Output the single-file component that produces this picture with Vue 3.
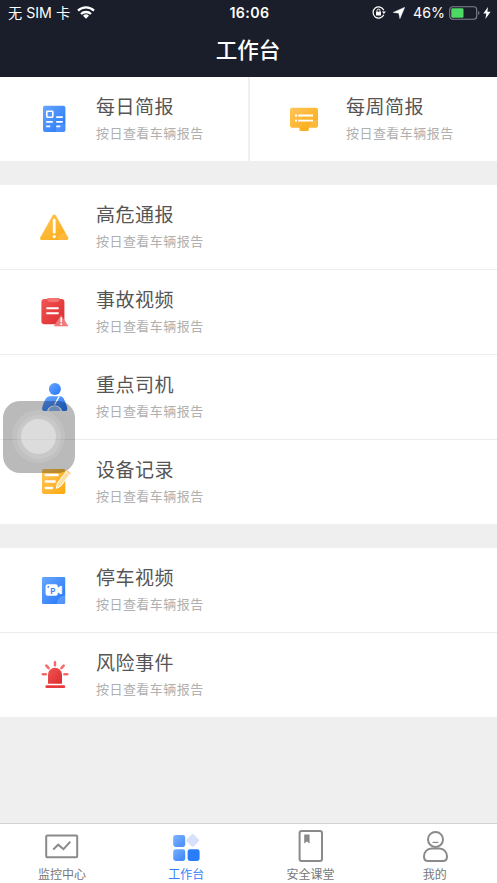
<script setup>
import { ref } from 'vue';

const reports = [
  { icon: 'daily', title: '每日简报' },
  { icon: 'weekly', title: '每周简报' }
];

const groups = [
  [
    { icon: 'danger', title: '高危通报' },
    { icon: 'accident', title: '事故视频' },
    { icon: 'driver', title: '重点司机' },
    { icon: 'device', title: '设备记录' }
  ],
  [
    { icon: 'parking', title: '停车视频' },
    { icon: 'risk', title: '风险事件' }
  ]
];

const sections = [reports, ...groups];
const subtitle = '按日查看车辆报告';

const tabs = [
  { key: 'monitor', label: '监控中心' },
  { key: 'work', label: '工作台' },
  { key: 'class', label: '安全课堂' },
  { key: 'mine', label: '我的' }
];

const activeTab = ref('work');
</script>

<template>
  <div class="page">
    <svg class="defs" width="0" height="0">
      <defs>
        <linearGradient id="blue" x1="0" y1="0" x2="1" y2="1">
          <stop offset="0" stop-color="#68a6ff" />
          <stop offset="1" stop-color="#2376f8" />
        </linearGradient>
        <linearGradient id="orange" x1="0" y1="0" x2="1" y2="1">
          <stop offset="0" stop-color="#ffc65c" />
          <stop offset="1" stop-color="#fca90d" />
        </linearGradient>
        <linearGradient id="red" x1="0" y1="0" x2="1" y2="1">
          <stop offset="0" stop-color="#f25453" />
          <stop offset="1" stop-color="#dc2c30" />
        </linearGradient>
      </defs>
    </svg>

    <header class="header">
      <div class="status">
        <div class="status-left">
          <span>无 SIM 卡</span>
          <svg class="wifi" width="18" height="13" viewBox="0 0 18 13">
            <g fill="none" stroke="#fff" stroke-width="2.3">
              <path d="M1 4.7a11.5 11.5 0 0 1 16 0" />
              <path d="M4 8a7.2 7.2 0 0 1 10 0" />
            </g>
            <path d="M6 9.8a4.3 4.3 0 0 1 6 0l-3 3z" fill="#fff" />
          </svg>
        </div>
        <span class="time">16:06</span>
        <div class="status-right">
          <svg width="14" height="13" viewBox="0 0 14 13">
            <path d="M11.8 4.2a5.6 5.6 0 1 0 0 4.6" fill="none" stroke="#fff" stroke-width="1.2" />
            <path d="M9.9 5.4h4l-2 2.6z" fill="#fff" />
            <rect x="4" y="5.8" width="5" height="3.8" rx=".5" fill="#fff" />
            <path d="M5 6V4.6a1.5 1.5 0 0 1 3 0V6" fill="none" stroke="#fff" />
          </svg>
          <svg class="arrow" width="12" height="12" viewBox="0 0 12 12">
            <path d="M11.8.2 6.9 11.8 5.8 6.2.1 5.4z" fill="#fff" stroke="#fff" stroke-width=".4" />
          </svg>
          <span class="percent">46%</span>
          <svg class="battery" width="32" height="14" viewBox="0 0 32 14">
            <rect x=".7" y=".7" width="27" height="12.6" rx="3" fill="none" stroke="#7f838b" stroke-width="1.1" />
            <rect x="2.3" y="2.3" width="12.2" height="9.4" rx="1.3" fill="#4cd964" />
            <path d="M29.2 5v4c1.7-.7 1.7-3.3 0-4z" fill="#7f838b" />
          </svg>
          <svg class="bolt" width="8" height="12" viewBox="0 0 8 12">
            <path d="M5 0 .3 6.6h3L2.4 12 7.6 4.8H4.4z" fill="#fff" />
          </svg>
        </div>
      </div>
      <h1>工作台</h1>
    </header>

    <main class="content">
      <section
        v-for="(items, index) in sections"
        :key="index"
        class="section"
        :class="{ split: index === 0 }"
      >
        <div v-for="item in items" :key="item.icon" class="item">
          <svg class="icon" width="40" height="40" viewBox="0 0 40 40">
            <g v-if="item.icon === 'daily'">
              <rect x="9" y="6.7" width="22.4" height="26.4" rx="2" fill="url(#blue)" />
              <path d="M22 33.1v-2a6 6 0 0 1 6-6h3.4v6a2 2 0 0 1-2 2z" fill="#fff" opacity=".14" />
              <rect x="12.8" y="12.2" width="6" height="6" rx=".6" fill="none" stroke="#fff" stroke-width="1.6" />
              <path d="M22.2 18.1h6.6M12.2 22.8h6.6M22.2 22.8h6.6M12.2 27.3h4M22.2 27.3h4" stroke="#fff" stroke-width="1.7" />
            </g>

            <g v-else-if="item.icon === 'weekly'">
              <path d="M8 8.7h24a2 2 0 0 1 2 2v16a2 2 0 0 1-2 2h-7.2V31a1 1 0 0 1-1 1h-7.4a1 1 0 0 1-1-1v-2.3H8a2 2 0 0 1-2-2v-16a2 2 0 0 1 2-2z" fill="url(#orange)" />
              <path d="M24.8 28.7a9 9 0 0 1 9.2-8v6a2 2 0 0 1-2 2z" fill="#fff" opacity=".12" />
              <path d="M11 16.5h2M14.2 16.5H29M11 21.7h2M14.2 21.7H29" stroke="#fff" stroke-width="1.8" />
            </g>

            <g v-else-if="item.icon === 'danger'">
              <path d="M18.6 8.5a1.9 1.9 0 0 1 3.3 0l12.2 22c.7 1.3 0 2.5-1.4 2.5H7.6c-1.4 0-2.1-1.2-1.4-2.5z" fill="url(#orange)" />
              <path d="M24 33c.3-4.4 3.2-7.5 7.4-7.5l2.7 5c.7 1.3 0 2.5-1.4 2.5z" fill="#fff" opacity=".14" />
              <path d="M20.2 13.2v12" stroke="#fff" stroke-width="2.8" stroke-linecap="round" />
              <circle cx="20.2" cy="29.6" r="1.6" fill="#fff" />
            </g>

            <g v-else-if="item.icon === 'accident'">
              <rect x="7.4" y="7" width="23" height="25.2" rx="3" fill="url(#red)" />
              <path d="M13.3 6h12.2v1.6a2.4 2.4 0 0 1-2.4 2.4h-7.4a2.4 2.4 0 0 1-2.4-2.4z" fill="#f47472" />
              <path d="M12.3 16.3h12.4M12.3 21.3h12.4" stroke="#fff" stroke-width="2" />
              <path d="M27.2 23.4 34 34H20.2z" fill="#f07a7c" stroke="#f07a7c" stroke-linejoin="round" stroke-width=".6" />
              <path d="M27.2 25.4v4.8M27.2 31.3v1.6" stroke="#fff" stroke-width="1.6" />
            </g>

            <g v-else-if="item.icon === 'driver'">
              <circle cx="20.9" cy="12" r="6" fill="url(#blue)" />
              <path d="M16 19.2h10c2.3 0 3.6 1.8 4.6 4.3 1.3 3.2 2.7 5.7 2.7 8.5 0 1.5-.9 2-2.3 2H10.8c-1.7 0-2.7-.6-2.7-2 0-2.8 1.4-5.3 2.7-8.5 1-2.5 2.9-4.3 5.2-4.3z" fill="url(#blue)" />
              <path d="M13 34a8 8 0 0 1 15.2 0z" fill="#fff" />
              <path d="M14.6 34a6.2 6.2 0 0 1 12 0z" fill="#8eb9fa" />
              <path d="m25.2 19.4-4.6 8.1" stroke="#fff" stroke-width="1.4" />
            </g>

            <g v-else-if="item.icon === 'device'">
              <rect x="8" y="7" width="23.3" height="25" rx="1.7" fill="url(#orange)" />
              <path d="M11.7 13h12M11.7 19.5h9M11.7 26h6.4" stroke="#fff" stroke-width="2.3" stroke-linecap="round" />
              <path d="m22.4 26.4 1-5.2L32.2 9.6l3.7 2.6-9 11.7z" fill="#ffdf9f" stroke="#fff" stroke-width="1" stroke-linejoin="round" />
              <path d="m32.2 9.6 1-1.3 3.8 2.6-1.1 1.4z" fill="#ffd080" />
            </g>

            <g v-else-if="item.icon === 'parking'">
              <rect x="8" y="7" width="23.2" height="27" rx="1.3" fill="url(#blue)" />
              <path d="M23 34a8.6 8.6 0 0 1 8.2-8.8v7.5a1.3 1.3 0 0 1-1.3 1.3z" fill="#fff" opacity=".2" />
              <rect x="11.6" y="14.3" width="12.2" height="11.5" rx="2.2" fill="#fff" />
              <path d="m23.3 18 3.8-2.4v8.8L23.3 22z" fill="#fff" />
              <path d="M27.7 16v8" stroke="#fff" stroke-width="1" />
              <circle cx="14.3" cy="16.9" r=".9" fill="#3c86f9" />
              <text class="p-mark" x="16.2" y="23.9">P</text>
            </g>

            <g v-else>
              <path d="M14 28.8v-9a7 7 0 0 1 14 0v9z" fill="url(#red)" />
              <rect x="11.4" y="30.2" width="19.8" height="2.8" rx="1.2" fill="#e83b3e" />
              <path d="M21 7.2v3M12.3 10.6l2.3 2.6M29.7 10.6l-2.3 2.6M8.8 19.3h3M30.3 19.3h3" stroke="#f4696b" stroke-width="2.5" stroke-linecap="round" />
            </g>
          </svg>
          <div class="text">
            <div class="title">{{ item.title }}</div>
            <div class="subtitle">{{ subtitle }}</div>
          </div>
        </div>
      </section>
    </main>

    <nav class="tabbar">
      <div
        v-for="tab in tabs"
        :key="tab.key"
        class="tab"
        :class="{ active: activeTab === tab.key }"
        @click="activeTab = tab.key"
      >
        <svg width="36" height="36" viewBox="0 0 36 36">
          <g v-if="tab.key === 'monitor'" fill="none" stroke="#8a8a8a" stroke-width="2">
            <rect x="2.2" y="7.6" width="31" height="21.6" rx="1" />
            <path d="m9.2 21.4 5-4.7 5.3 4.5 6.8-7.6" />
          </g>
          <g v-else-if="tab.key === 'work'">
            <rect x="5.2" y="7" width="12" height="12" rx="2.4" fill="url(#blue)" opacity=".85" />
            <rect x="5.2" y="21.3" width="12" height="11.7" rx="2.4" fill="url(#blue)" opacity=".9" />
            <rect x="19.6" y="21.3" width="12" height="11.7" rx="2.4" fill="#2a7dfa" />
            <rect x="19.7" y="7.4" width="10" height="10" rx="1.6" fill="#d8e0fb" transform="rotate(45 24.7 12.4)" />
          </g>
          <g v-else-if="tab.key === 'class'">
            <rect x="6.6" y="3" width="22.4" height="30" rx="2" fill="none" stroke="#8a8a8a" stroke-width="2" />
            <path d="M11.2 6.6h5.4v9l-2.7-2-2.7 2z" fill="#8a8a8a" />
          </g>
          <g v-else fill="none" stroke="#8a8a8a" stroke-width="2">
            <circle cx="18.5" cy="11.4" r="7.5" />
            <path d="M15.6 14.4h5.8" stroke-width="1.2" />
            <path d="M14.5 20.5h8c4.4 0 7.5 3.6 7.5 8 0 2.7-1.4 4.5-4 4.5H11c-2.6 0-4-1.8-4-4.5 0-4.4 3.1-8 7.5-8z" />
          </g>
        </svg>
        <span>{{ tab.label }}</span>
      </div>
    </nav>

    <div class="float-ball">
      <div class="ring">
        <div class="ring-inner">
          <div class="core"></div>
        </div>
      </div>
    </div>
  </div>
</template>

<style>
body {
  margin: 0;
}
</style>

<style scoped>
.page {
  position: relative;
  display: flex;
  flex-direction: column;
  height: 883px;
  overflow: hidden;
  background: #efefef;
  font-family: Inter, "Noto Sans CJK SC", sans-serif;
}

.defs {
  position: absolute;
}

.header {
  height: 77px;
  flex: none;
  background: #191e2a;
  color: #fff;
}

.status {
  display: grid;
  grid-template-columns: 1fr auto 1fr;
  align-items: center;
  height: 25px;
  padding: 0 6px 0 8px;
  font-size: 14.2px;
  line-height: 25px;
}

.status-left,
.status-right {
  display: flex;
  align-items: center;
}

.status-left {
  gap: 7px;
  white-space: nowrap;
}

.status-right {
  justify-content: flex-end;
}

.time {
  font-weight: 600;
  letter-spacing: 0.4px;
}

.arrow {
  margin-left: 7px;
}

.percent {
  margin-left: 8px;
}

.battery {
  margin-left: 4px;
}

.bolt {
  margin-left: 2px;
}

h1 {
  margin: 9px 0 0;
  padding-right: 1px;
  font-size: 21.5px;
  font-weight: 500;
  line-height: 32px;
  text-align: center;
}

.content {
  flex: 1;
}

.section {
  margin-bottom: 24px;
  background: #fff;
}

.item {
  display: flex;
  gap: 22px;
  box-sizing: border-box;
  height: 85px;
  padding: 22px 0 0 34px;
  border-bottom: 1px solid #ececec;
}

.item:last-child {
  height: 84px;
  border-bottom: none;
}

.split {
  display: grid;
  grid-template-columns: 250px 1fr;
}

.split .item {
  height: 84px;
  border-bottom: none;
}

.split .item:first-child {
  border-right: 2px solid #efefef;
}

.icon {
  flex: none;
}

.text {
  margin-top: -6px;
  white-space: nowrap;
}

.title {
  font-size: 19px;
  font-weight: 400;
  letter-spacing: 0.5px;
  line-height: 30px;
  color: #555;
}

.subtitle {
  margin-top: -2px;
  font-size: 13px;
  font-weight: 400;
  letter-spacing: 0.45px;
  line-height: 24px;
  color: #b0b0b0;
}

.p-mark {
  font-family: Inter, sans-serif;
  font-size: 8px;
  font-weight: 700;
  fill: #3c86f9;
}

.tabbar {
  display: flex;
  flex: none;
  box-sizing: border-box;
  height: 60px;
  border-top: 1px solid #d2d2d2;
  background: #fff;
}

.tab {
  display: flex;
  flex: 1;
  flex-direction: column;
  align-items: center;
  padding-top: 4px;
  font-size: 12px;
  line-height: 22px;
  color: #777;
}

.tab svg {
  flex: none;
}

.tab.active {
  color: #2f82f7;
}

.float-ball {
  position: absolute;
  top: 400.8px;
  left: 2.6px;
  display: flex;
  align-items: center;
  justify-content: center;
  width: 72px;
  height: 72px;
  border-radius: 17px;
  background: rgba(0, 0, 0, 0.27);
}

.ring,
.ring-inner,
.core {
  display: flex;
  align-items: center;
  justify-content: center;
  border-radius: 50%;
}

.ring {
  width: 53px;
  height: 53px;
  background: rgba(255, 255, 255, 0.11);
}

.ring-inner {
  width: 44px;
  height: 44px;
  background: rgba(255, 255, 255, 0.12);
}

.core {
  width: 35px;
  height: 35px;
  background: rgba(255, 255, 255, 0.36);
}
</style>
